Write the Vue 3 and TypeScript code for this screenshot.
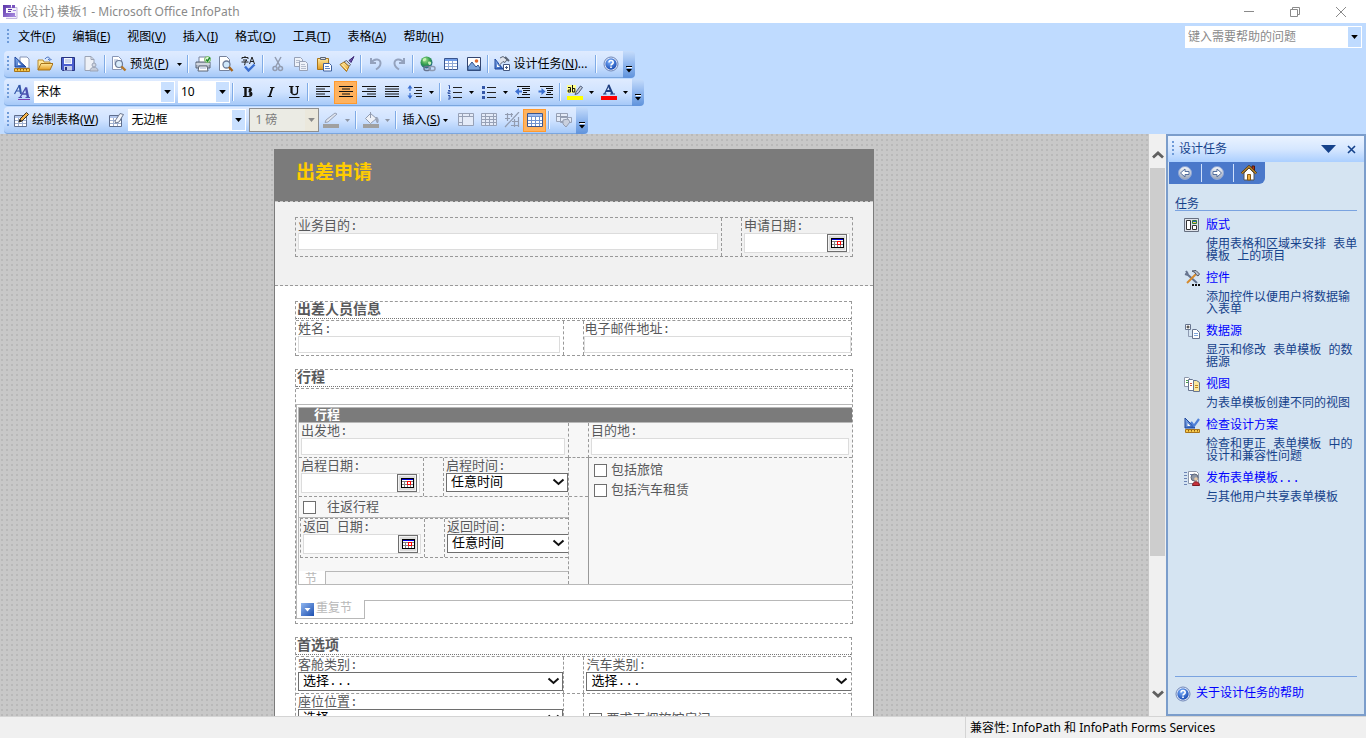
<script setup lang="ts">
import { ref } from 'vue'

interface MenuEntry { label: string; key: string }
interface Task { icon: string; title: string; lines: string[] }
interface Tool { kind: 'btn' | 'sep' | 'caret' | 'text' | 'combo'; icon?: string; title?: string; label?: string; key?: string; tail?: string; value?: string; size?: string; active?: boolean; disabled?: boolean; drop?: boolean }

const menus: MenuEntry[] = [
  { label: '文件', key: 'F' },
  { label: '编辑', key: 'E' },
  { label: '视图', key: 'V' },
  { label: '插入', key: 'I' },
  { label: '格式', key: 'O' },
  { label: '工具', key: 'T' },
  { label: '表格', key: 'A' },
  { label: '帮助', key: 'H' },
]

const b = (icon: string, title: string, extra: Partial<Tool> = {}): Tool => ({ kind: 'btn', icon, title, ...extra })
const sep: Tool = { kind: 'sep' }
const caret = (title: string, disabled = false): Tool => ({ kind: 'caret', title, disabled })

const bars: { name: string; tools: Tool[] }[] = [
  {
    name: '标准',
    tools: [
      b('design', '设计表单'), b('open', '打开'), b('save', '保存'), b('publish', '发布'), sep,
      { kind: 'text', icon: 'preview', label: '预览', key: 'P' }, caret('预览选项'), sep,
      b('print', '打印'), b('lens', '打印预览'), b('spell', '拼写检查'), sep,
      b('cut', '剪切'), b('copy', '复制'), b('paste', '粘贴'), b('brush', '格式刷'), sep,
      b('undo', '撤消'), b('redo', '恢复'), sep,
      b('globe', '超链接'), b('table', '表格'), b('picture', '图片'), sep,
      { kind: 'text', icon: 'tools', label: '设计任务', key: 'N', tail: '...' }, sep,
      b('help', '帮助'),
    ],
  },
  {
    name: '格式',
    tools: [
      b('styles', '样式'), { kind: 'combo', title: '字体', value: '宋体', size: 'font' },
      { kind: 'combo', title: '字号', value: '10', size: 'points' }, sep,
      b('bold', '加粗'), b('italic', '倾斜'), b('underline', '下划线'), sep,
      b('left', '左对齐'), b('center', '居中', { active: true }), b('right', '右对齐'), b('justify', '两端对齐'),
      b('spacing', '行距'), caret('行距选项'), sep,
      b('numbers', '编号'), caret('编号选项'), b('bullets', '项目符号'), caret('项目符号选项'),
      b('outdent', '减少缩进'), b('indent', '增加缩进'), sep,
      b('highlight', '突出显示'), caret('突出显示颜色'), b('color', '字体颜色'), caret('字体颜色选项'),
    ],
  },
  {
    name: '表格',
    tools: [
      { kind: 'text', icon: 'drawtable', label: '绘制表格', key: 'W' }, b('eraser', '擦除'),
      { kind: 'combo', title: '线型', value: '无边框', size: 'line' },
      { kind: 'combo', title: '粗细', value: '1 磅', size: 'weight', disabled: true },
      b('pen', '边框颜色'), caret('边框颜色选项', true), sep,
      b('bucket', '底纹颜色'), caret('底纹颜色选项', true), sep,
      { kind: 'text', label: '插入', key: 'S', drop: true },
      b('merge', '合并单元格'), b('split', '拆分单元格'), b('diag', '斜线'),
      b('grid', '显示网格线', { active: true }), sep, b('props', '表格属性'),
    ],
  },
]

const tasks: Task[] = [
  { icon: 'layout', title: '版式', lines: ['使用表格和区域来安排 表单', '模板 上的项目'] },
  { icon: 'controls', title: '控件', lines: ['添加控件以便用户将数据输', '入表单'] },
  { icon: 'source', title: '数据源', lines: ['显示和修改 表单模板 的数', '据源'] },
  { icon: 'views', title: '视图', lines: ['为表单模板创建不同的视图'] },
  { icon: 'check', title: '检查设计方案', lines: ['检查和更正 表单模板 中的', '设计和兼容性问题'] },
  { icon: 'share', title: '发布表单模板...', lines: ['与其他用户共享表单模板'] },
]

const question = ref('')
</script>

<template>
  <div class="app">
    <svg class="defs" width="0" height="0" aria-hidden="true">
      <defs>
        <linearGradient id="gBlue" x1="0" y1="0" x2="1" y2="1"><stop offset="0" stop-color="#8fb6f0" /><stop offset="1" stop-color="#1d4fb0" /></linearGradient>
        <linearGradient id="gGold" x1="0" y1="0" x2="0" y2="1"><stop offset="0" stop-color="#ffe9a0" /><stop offset="1" stop-color="#e39a1c" /></linearGradient>
        <linearGradient id="gGrey" x1="0" y1="0" x2="0" y2="1"><stop offset="0" stop-color="#f6f8fc" /><stop offset="1" stop-color="#9aa4b8" /></linearGradient>
        <radialGradient id="gBall" cx=".4" cy=".3" r=".8"><stop offset="0" stop-color="#7db2ff" /><stop offset="1" stop-color="#0d3ea8" /></radialGradient>
        <radialGradient id="gGlobe" cx=".4" cy=".3" r=".8"><stop offset="0" stop-color="#9fe08a" /><stop offset=".5" stop-color="#2f9a4c" /><stop offset="1" stop-color="#1c4fa0" /></radialGradient>
        <linearGradient id="gApp" x1="0" y1="0" x2="1" y2="1"><stop offset="0" stop-color="#5b35a8" /><stop offset="1" stop-color="#a98be0" /></linearGradient>
      </defs>
      <symbol id="i-app" viewBox="0 0 16 16">
        <path d="M6 3.500h9v11H4" fill="#f3f0fa" stroke="#c3b6de" /><path d="M1 1h8v3H4v5h9v4H1z" fill="url(#gApp)" /><path d="M10 1h3v3h-3z" fill="#7a55c0" /><path d="M6 5.500h4M6 7.500h3" stroke="#5b35a8" stroke-width="1.200" /><path d="M11 6.500h3M11 12.500h3" stroke="#a98be0" />
      </symbol>
      <symbol id="i-design" viewBox="0 0 16 16">
        <path d="M6 1h7l2 2v9H6z" fill="#fff" stroke="#8795b5" /><path d="M1 1v10h11z" fill="url(#gBlue)" stroke="#1c459c" /><path d="M4 6v3h3z" fill="#fff" /><path d="M.5 12.500h15v3H.5z" fill="#f7c94b" stroke="#a8741a" /><path d="M3.500 13v1.500M6.500 13v1.500M9.500 13v1.500M12.500 13v1.500" stroke="#8a5a10" />
      </symbol>
      <symbol id="i-open" viewBox="0 0 16 16">
        <path d="M1 14V4h5l1 2h6v2" fill="#ffe79a" stroke="#b98a2c" /><path d="M1 14l3-6.500h12L13 14z" fill="url(#gGold)" stroke="#a8741a" /><path d="M8 3c2-3 5-2 5 .5m-2-.5l2 1.500L14.500 3" fill="none" stroke="#3c66b8" />
      </symbol>
      <symbol id="i-save" viewBox="0 0 16 16">
        <path d="M1.500 1.500h13v13h-12l-1-1z" fill="#4c5fd0" stroke="#27347f" /><path d="M4 2h8v6H4z" fill="#f4f7ff" /><path d="M5 4h6M5 6h6" stroke="#a9b6d8" /><path d="M4 10h8v4.500H4z" fill="#c5cdea" /><path d="M5 11h2v3H5z" fill="#27347f" />
      </symbol>
      <symbol id="i-publish" viewBox="0 0 16 16">
        <path d="M2 .5h6l3 3v11H2z" fill="#eef1f7" stroke="#9aa3b5" /><path d="M8 .5v3h3" fill="none" stroke="#9aa3b5" /><circle cx="11" cy="9" r="2" fill="#d3d9e4" stroke="#9aa3b5" /><path d="M7 15c0-5 8-5 8 0z" fill="#c5ccd9" stroke="#9aa3b5" />
      </symbol>
      <symbol id="i-preview" viewBox="0 0 16 16">
        <path d="M1.500.5h6l3 3v10h-9z" fill="#fff" stroke="#8795b5" /><path d="M3 4h4M3 6h5M3 8h3" stroke="#9fb0d0" /><circle cx="8" cy="8" r="3.500" fill="#d9ecfb" stroke="#6c7b98" stroke-width="1.200" /><path d="M10.500 10.500l4 4" stroke="#b5782b" stroke-width="2.400" />
      </symbol>
      <symbol id="i-print" viewBox="0 0 16 16">
        <path d="M4 6V1h7v5" fill="#fff" stroke="#76829c" /><path d="M1 6h14v6H1z" fill="#b0b8c6" stroke="#5b6474" /><path d="M1 8h14" stroke="#f3f5f9" /><path d="M4 10h8l1 5H3z" fill="#fff" stroke="#5b6474" /><path d="M5 12h6" stroke="#9fb0d0" /><circle cx="12.500" cy="3.500" r="3" fill="#dff3d8" stroke="#6db35a" /><path d="M11 3.500l1.500 1.500L15 1.500" fill="none" stroke="#1f8b2a" stroke-width="1.500" />
      </symbol>
      <symbol id="i-lens" viewBox="0 0 16 16">
        <path d="M1.500.5h7l3 3v11h-10z" fill="#fff" stroke="#76829c" /><circle cx="8.500" cy="8.500" r="3.500" fill="#cfe7fa" stroke="#6c7b98" stroke-width="1.300" /><path d="M11 11l3.500 4" stroke="#a5641c" stroke-width="2.400" />
      </symbol>
      <symbol id="i-spell" viewBox="0 0 16 16">
        <path d="M1 3V1.500h6V3M4 0v1.500M2 4h4L4 5.500V8.500L3 9M.5 6h7" fill="none" stroke="#222" /><path d="M8.500 8l2.500-7 2.500 7M9.500 5.500h3.500" fill="none" stroke="#222" /><path d="M4 10.500l3.500 4 6-6" fill="none" stroke="#3b6fd0" stroke-width="2.400" />
      </symbol>
      <symbol id="i-cut" viewBox="0 0 16 16">
        <path d="M5 1l5 9M11 1L6 10" fill="none" stroke="#929cb0" stroke-width="1.500" /><circle cx="5" cy="12.500" r="2" fill="none" stroke="#929cb0" stroke-width="1.500" /><circle cx="10.500" cy="12.500" r="2" fill="none" stroke="#929cb0" stroke-width="1.500" />
      </symbol>
      <symbol id="i-copy" viewBox="0 0 16 16">
        <path d="M1.500 1.500h6l2 2v7h-8z" fill="#eef2f9" stroke="#97a1b6" /><path d="M3 4.500h4M3 6.500h4" stroke="#b5bdcd" /><path d="M6.500 5.500h6l2 2v7h-8z" fill="#eef2f9" stroke="#97a1b6" /><path d="M8 8.500h4M8 10.500h5M8 12.500h5" stroke="#b5bdcd" />
      </symbol>
      <symbol id="i-paste" viewBox="0 0 16 16">
        <path d="M1.500 2.500h11v11h-11z" fill="url(#gGold)" stroke="#a8741a" /><path d="M4.500 1.500h5v2h-5z" fill="#d7dbe4" stroke="#5b6474" /><path d="M7.500 7.500h6l2 2v5.500h-8z" fill="#fff" stroke="#3f5f9c" /><path d="M9 10.500h4M9 12.500h5" stroke="#5f86c8" />
      </symbol>
      <symbol id="i-brush" viewBox="0 0 16 16">
        <path d="M15 .5l-5 4 2 2z" fill="#6b4fa8" stroke="#3e2a77" /><path d="M7.500 4.500l4 4-1.500 2-5-4.500z" fill="#cfd4e0" stroke="#5b6474" /><path d="M5 6l5 4.500-2.500 5L1 8.500z" fill="url(#gGold)" stroke="#a8741a" /><path d="M3 8.500l5 5.500" stroke="#fff3c0" />
      </symbol>
      <symbol id="i-undo" viewBox="0 0 16 16"><path d="M3 2v5h5M3.500 6.500C6 2 13 2.500 12.500 7.500c-.2 2.500-2 4.500-4.500 6" fill="none" stroke="#94a2bd" stroke-width="2" /></symbol>
      <symbol id="i-redo" viewBox="0 0 16 16"><path d="M13 2v5H8M12.500 6.500C10 2 3 2.500 3.500 7.500c.2 2.500 2 4.500 4.500 6" fill="none" stroke="#94a2bd" stroke-width="2" /></symbol>
      <symbol id="i-globe" viewBox="0 0 16 16">
        <circle cx="6.500" cy="6.500" r="6" fill="url(#gGlobe)" /><path d="M3 3c2-2 4-1 3 1S2 6 3 3M8 6c2-1 4 0 3 2s-3 1-3-2" fill="#c4f0b4" /><rect x="4" y="10.500" width="6" height="4" rx="2" fill="none" stroke="#66748f" stroke-width="1.500" /><rect x="9" y="10.500" width="6" height="4" rx="2" fill="none" stroke="#8e9ab2" stroke-width="1.500" />
      </symbol>
      <symbol id="i-table" viewBox="0 0 16 16">
        <path d="M1.500 2.500h13v11h-13z" fill="#fff" stroke="#39558f" /><path d="M2 3h12v2H2z" fill="#6f9be8" /><path d="M2 7.500h12M2 10.500h12M5.500 5v8.500M9.500 5v8.500" stroke="#8fa8d6" />
      </symbol>
      <symbol id="i-picture" viewBox="0 0 16 16">
        <path d="M1.500 1.500h13v13h-13z" fill="#fff" stroke="#33456f" /><path d="M2 14v-3l4-5 4 5 2-2 2 3v2z" fill="#7ea6dc" stroke="#33568f" /><circle cx="10.500" cy="5" r="1.800" fill="#e06a2c" />
      </symbol>
      <symbol id="i-tools" viewBox="0 0 16 16">
        <path d="M1 3v10h8z" fill="url(#gBlue)" stroke="#1c459c" /><path d="M3 8v3h3z" fill="#fff" /><path d="M6 2l3-1.500 4 3-2 3-2-1-4 4" fill="#dfe3ec" stroke="#5b6474" /><path d="M11 1l4 4" stroke="#5b6474" stroke-width="2" /><path d="M9.500 8.500h6v6h-6z" fill="#fff" stroke="#44577f" /><path d="M12.500 10v3M11 11.500h3" stroke="#44577f" />
      </symbol>
      <symbol id="i-help" viewBox="0 0 16 16">
        <circle cx="8" cy="8" r="7" fill="#e8eefb" stroke="#6f86b8" /><circle cx="8" cy="8" r="5.700" fill="url(#gBall)" /><path d="M6 6.500c0-3 4.200-2.500 4.200 0C10.200 8 8 8 8 9.500M8 10.500v1.500" fill="none" stroke="#fff" stroke-width="1.600" />
      </symbol>
      <symbol id="i-styles" viewBox="0 0 16 16">
        <path d="M.5 10L5.500 1M2.500 7h4" fill="none" stroke="#3457a8" stroke-width="1.200" /><path d="M5.500 1L7 10" stroke="#3457a8" stroke-width="2" /><path d="M6 13.500l6-10M8.500 10h5" fill="none" stroke="#4a4fb0" stroke-width="1.400" /><path d="M12 3.500l2 10" stroke="#4a4fb0" stroke-width="2.400" /><path d="M4.500 13.500h3.500M11.500 13.500h4.500" stroke="#4a4fb0" /><path d="M4 15.500h12" stroke="#7d3fb0" />
      </symbol>
      <symbol id="i-bold" viewBox="0 0 16 16"><path d="M3 3.500h5.500c3.500 0 3.500 4 0 4.200 4.500 0 4.500 4.800 0 4.800H3" fill="none" stroke="#111" stroke-width="1.200" /><path d="M5.500 3v10M10 4.500v2.500M10.500 8.500v3" stroke="#111" stroke-width="2.400" /></symbol>
      <symbol id="i-italic" viewBox="0 0 16 16"><path d="M7 3.500h4.500M4.500 12.500H9" fill="none" stroke="#111" /><path d="M9.500 3.500l-3 9" stroke="#111" stroke-width="1.800" /></symbol>
      <symbol id="i-underline" viewBox="0 0 16 16"><path d="M3 2.500h4.500M9.500 2.500H13M11.500 2.500V8c0 3.500-6 3.500-6 0" fill="none" stroke="#111" stroke-width="1.200" /><path d="M5.500 2.500V9" stroke="#111" stroke-width="2.200" /><path d="M3 13.500h10.500" stroke="#111" /></symbol>
      <symbol id="i-left" viewBox="0 0 16 16"><path d="M1 2.500h14M1 5h9M1 7.500h14M1 10h9M1 12.500h14" stroke="#111" stroke-width="1.100" /></symbol>
      <symbol id="i-center" viewBox="0 0 16 16"><path d="M1 2.500h14M4 5h8M1 7.500h14M4 10h8M1 12.500h14" stroke="#111" stroke-width="1.100" /></symbol>
      <symbol id="i-right" viewBox="0 0 16 16"><path d="M1 2.500h14M6 5h9M1 7.500h14M6 10h9M1 12.500h14" stroke="#111" stroke-width="1.100" /></symbol>
      <symbol id="i-justify" viewBox="0 0 16 16"><path d="M1 2.500h14M1 5h14M1 7.500h14M1 10h14M1 12.500h14" stroke="#111" stroke-width="1.100" /></symbol>
      <symbol id="i-spacing" viewBox="0 0 16 16"><path d="M7 3.500h8M9 6.500h6M7 9.500h8M9 12.500h6" stroke="#222" /><path d="M3 2v12" stroke="#3b6fd0" stroke-width="1.200" stroke-dasharray="5 2" /><path d="M.5 4.500L3 1l2.500 3.500zM.5 11.500L3 15l2.500-3.500z" fill="#3b6fd0" /></symbol>
      <symbol id="i-numbers" viewBox="0 0 16 16"><path d="M6 3.500h9M6 8.500h9M6 13.500h9" stroke="#222" /><path d="M1.500 1.500h1V5M1 6.500h2v1.500H1v1.500h2.500M1 11.500h2v3.500H1M1.500 13H3" fill="none" stroke="#3457a8" /></symbol>
      <symbol id="i-bullets" viewBox="0 0 16 16"><path d="M6 3.500h9M6 8.500h9M6 13.500h9" stroke="#222" /><path d="M1 2h3v3H1zM1 7h3v3H1zM1 12h3v3H1z" fill="#3457a8" /></symbol>
      <symbol id="i-outdent" viewBox="0 0 16 16"><path d="M2 2.500h13M7 4.500h8M8 6.500h7M8 8.500h4M7 10.500h8M2 13.500h13" stroke="#111" /><path d="M0 7.500L4 4v2.500h3v2H4V11z" fill="#3b6fd0" /></symbol>
      <symbol id="i-indent" viewBox="0 0 16 16"><path d="M2 2.500h13M8 4.500h7M9 6.500h6M9 8.500h4M8 10.500h7M2 13.500h13" stroke="#111" /><path d="M7.500 7.500L3.500 4v2.500h-3v2h3V11z" fill="#3b6fd0" /></symbol>
      <symbol id="i-highlight" viewBox="0 0 16 16"><path d="M0 1h9v8H0z" fill="#ffff8c" /><path d="M1 3.500h2.500V8H1.200V6h2.300M5.500 1v7h2.300V4.500H5.500" fill="none" stroke="#111" /><path d="M9 8l4.500-6 2 1.500-4.500 6-3 1z" fill="#c3cad8" stroke="#4a5878" /><path d="M0 12h16v4H0z" fill="#ff0" /></symbol>
      <symbol id="i-color" viewBox="0 0 16 16"><path d="M2 10h3.500M9 10h5M3.500 10L8 .8" fill="none" stroke="#1f3f80" stroke-width="1.200" /><path d="M7.500 1l4 9M5 7h5" stroke="#1f3f80" stroke-width="2" /><path d="M0 12h16v4H0z" fill="#f00" /></symbol>
      <symbol id="i-drawtable" viewBox="0 0 16 16">
        <path d="M1.500 3.500h12v11h-12z" fill="#fff" stroke="#5e6d8c" /><path d="M2 4h11v2H2z" fill="#b4c7ec" /><path d="M2 8.500h11M2 11.500h11M5.500 6v8M9.500 6v8" stroke="#9fb0d0" /><path d="M6 10l1-3 6.500-6.500 2 2L9 9z" fill="#f3b24c" stroke="#3a3020" /><path d="M6 10l1-3 2 2z" fill="#222" />
      </symbol>
      <symbol id="i-eraser" viewBox="0 0 16 16">
        <path d="M1.500 3.500h12v11h-12z" fill="#fff" stroke="#5e6d8c" /><path d="M2 4h11v2H2z" fill="#b4c7ec" /><path d="M2 8.500h11M2 11.500h11M5.500 6v8M9.500 6v8" stroke="#9fb0d0" /><path d="M7 9l5-7.500 3.500 1L11 10l-3.500 1z" fill="#f3f5fa" stroke="#6c7890" />
      </symbol>
      <symbol id="i-pen" viewBox="0 0 16 16"><path d="M2 10.500l3-.5L14 2l-2-1-9 7z" fill="#e0e5ee" stroke="#97a1b6" /><path d="M0 12h16v4H0z" fill="#a0a0a0" /></symbol>
      <symbol id="i-bucket" viewBox="0 0 16 16"><path d="M2.500 6.500l5-5 6 5-6 5z" fill="#eef1f7" stroke="#929cb0" /><path d="M7.500 0v6M13.500 5c2.500 2 1.500 5 1 6-1.500-2-2-4-1-6z" fill="#a5aec0" stroke="#929cb0" /><path d="M0 12h16v4H0z" fill="#a0a0a0" /></symbol>
      <symbol id="i-merge" viewBox="0 0 16 16"><path d="M.5 1.500h15v12H.5z" fill="#e4ebf8" stroke="#97a1b6" /><path d="M0 4.500h16M4.500 1v12.500M11.500 1v3.500M0 10.500h5" stroke="#97a1b6" /></symbol>
      <symbol id="i-split" viewBox="0 0 16 16"><path d="M.5 1.500h15v12H.5z" fill="#e4ebf8" stroke="#97a1b6" /><path d="M0 4.500h16M0 7.500h16M0 10.500h16M4.500 1v12.500M8.500 4v9M12.500 1v12.500" stroke="#97a1b6" /></symbol>
      <symbol id="i-diag" viewBox="0 0 16 16"><path d="M15 0L1 15M1 2.500h8M1 6.500h5M3.500 1v8M7.500 1v4M8 9.500h7M7 13.500h8M10.500 7v8M14.500 5v10" stroke="#929cb0" stroke-width="1.200" /></symbol>
      <symbol id="i-grid" viewBox="0 0 16 16"><path d="M.5 1.500h15v13H.5z" fill="#fff" stroke="#39558f" /><path d="M1 2h14v2H1z" fill="#9fbcf0" /><path d="M1 4.500h14M1 8.500h14M1 11.500h14M4.500 4v10M8.500 4v10M12.500 4v10" stroke="#6f93d0" /></symbol>
      <symbol id="i-props" viewBox="0 0 16 16"><path d="M.5 1.500h11v8H.5zM4.500 5.500h11v5h-11z" fill="#e4ebf8" stroke="#97a1b6" /><path d="M0 4.500h11M4.500 1v8M7 8l5-1 2 3-4 5-3-3z" fill="#c9d0de" stroke="#929cb0" /></symbol>
      <symbol id="i-layout" viewBox="0 0 16 16"><path d="M.5 1.500h14v13H.5z" fill="#dfe3ea" stroke="#666f80" /><path d="M2.500 3.500h4v9h-4z" fill="#fff" stroke="#333" /><path d="M8.500 3.500h4v3h-4z" fill="#f1d04c" stroke="#2f7a3c" /><path d="M8.500 8.500h4v4h-4z" fill="#fff" stroke="#333" /><path d="M9 4h3v1H9z" fill="#2c66d0" /></symbol>
      <symbol id="i-controls" viewBox="0 0 16 16"><path d="M2 1l2 3M1 4l3 1 9 8" fill="none" stroke="#66748f" stroke-width="2" /><path d="M3 13L12 4" stroke="#d58a2c" stroke-width="2" /><path d="M8 1l4-.5 3.500 3.500-1.500 2-2-1.500-1-2z" fill="#b9c0cc" stroke="#4d5666" /><path d="M8 14h2v2H8zM11 14h2v2h-2zM14 14h2v2h-2z" fill="#111" /></symbol>
      <symbol id="i-source" viewBox="0 0 16 16"><path d="M1.500 1.500h5v5h-5z" fill="#fff" stroke="#66748f" /><path d="M4 2.500v3M2.500 4h3" stroke="#222" /><path d="M4.500 7v6.500H8" fill="none" stroke="#8e9ab2" /><path d="M8.500 6.500h4l3 3v6h-7z" fill="#fff" stroke="#66748f" /><path d="M10 10.500h4M10 12.500h4" stroke="#7ea6dc" /></symbol>
      <symbol id="i-views" viewBox="0 0 16 16"><path d="M.5 1.500h4l2 2v7h-6z" fill="#fff" stroke="#8d97ab" /><path d="M4.500 3.500h4l2 2v9h-6z" fill="#fff" stroke="#66748f" /><path d="M9.500 4.500h3l3 2v9H9.500z" fill="#fbe7a0" stroke="#66748f" /><path d="M2 4.500h2M2 6.500h2" stroke="#4aa04a" /><path d="M6 7.500h2M6 9.500h2" stroke="#d0503c" /><path d="M11 9.500h3M11 11.500h3" stroke="#c88a1c" /></symbol>
      <symbol id="i-check" viewBox="0 0 16 16"><path d="M1 1v10h10z" fill="url(#gBlue)" stroke="#1c459c" /><path d="M3.500 6v3h3z" fill="#fff" /><path d="M7 5l3 4 5-7" fill="none" stroke="#4f80d8" stroke-width="2.200" /><path d="M1.500 12.500h14v3h-14z" fill="#f7c94b" stroke="#a8741a" /><path d="M4.500 13v1.500M7.500 13v1.500M10.500 13v1.500M13.500 13v1.500" stroke="#8a5a10" /></symbol>
      <symbol id="i-share" viewBox="0 0 16 16"><path d="M4.500 1.500h8l2 2v10h-10z" fill="#fff" stroke="#8d97ab" /><path d="M0 2.500h3M0 5.500h3M0 8.500h3M0 11.500h3M0 14.500h3M6 4.500h5" stroke="#6c83b5" /><circle cx="10.500" cy="7.500" r="3.500" fill="#8f98a8" stroke="#5d6676" /><circle cx="12" cy="9" r="1.800" fill="#e9cba8" /><path d="M8.500 15.500c0-5 7-5 7 0z" fill="#c8323c" stroke="#7c1a22" /></symbol>
      <symbol id="i-back" viewBox="0 0 16 16"><circle cx="8" cy="8" r="6.500" fill="url(#gGrey)" stroke="#8ea6d6" /><path d="M3.500 8L8 4v2.500h4v3H8V12z" fill="#fff" stroke="#56709f" /></symbol>
      <symbol id="i-next" viewBox="0 0 16 16"><circle cx="8" cy="8" r="6.500" fill="url(#gGrey)" stroke="#8ea6d6" /><path d="M12.500 8L8 4v2.500H4v3h4V12z" fill="#fff" stroke="#56709f" /></symbol>
      <symbol id="i-home" viewBox="0 0 16 16"><path d="M11 1h2.500v5H11z" fill="#b5301c" stroke="#4a1a10" /><path d="M3 8l5-5 5 5v7H3z" fill="#fff" stroke="#555" /><path d="M.8 8.500L8 1.500l7.200 7" fill="none" stroke="#5a3a10" stroke-width="2.400" /><path d="M.8 8.500L8 1.500l7.200 7" fill="none" stroke="#f0b840" /><path d="M6.500 9.500h3V15h-3z" fill="#f0b040" stroke="#8a5a10" /></symbol>
      <symbol id="i-cal" viewBox="0 0 13 10"><path d="M0 0h13v10H0z" fill="#000" /><path d="M1 1h11v8H1z" fill="#fff" /><path d="M1 3h11v1H1zM1 6h11v1H1zM3 3h1v6H3zM6 3h1v6H6zM9 3h1v6H9z" fill="#808080" /><path d="M1 1h11v1H1z" fill="#0000e0" /><path d="M6 3h4v4H6z" fill="#f00" /><path d="M7 4h2v2H7z" fill="#fff" /></symbol>
      <symbol id="i-caret" viewBox="0 0 5 3"><path d="M0 0h5L2.500 3z" fill="currentColor" /></symbol>
      <symbol id="i-chev" viewBox="0 0 12 8"><path d="M1 1.500l5 4.500 5-4.500" fill="none" stroke="currentColor" stroke-width="2" /></symbol>
      <symbol id="i-arrow" viewBox="0 0 12 8"><path d="M1 1.500l5 4.500 5-4.500" fill="none" stroke="currentColor" stroke-width="2.800" /></symbol>
      <symbol id="i-more" viewBox="0 0 6 8"><path d="M0 .5h6" stroke="#000" /><path d="M0 3h6L3 6.500z" fill="#000" /><path d="M1 1.500h6" stroke="#fff" /></symbol>
      <symbol id="i-repeat" viewBox="0 0 13 13"><path d="M0 0h13v13H0z" fill="url(#gBlue)" /><path d="M3.500 5h6l-3 3.500z" fill="#fff" /></symbol>
    </svg>

    <header class="titlebar">
      <svg class="ic"><use href="#i-app" /></svg>
      <h1>(设计) 模板1 - Microsoft Office InfoPath</h1>
      <div class="winbtns">
        <button type="button" aria-label="最小化"><svg width="12" height="12"><path d="M1 5.500h10" stroke="#8a8a8a" /></svg></button>
        <button type="button" aria-label="还原"><svg width="12" height="12"><path d="M1.500 3.500h7v7h-7zM3.500 3V1.500h7v7H9" fill="none" stroke="#8a8a8a" /></svg></button>
        <button type="button" aria-label="关闭"><svg width="12" height="12"><path d="M1 1l10 10M11 1L1 11" stroke="#8a8a8a" /></svg></button>
      </div>
    </header>

    <nav class="menubar">
      <span class="grip"></span>
      <button v-for="m in menus" :key="m.key" type="button">{{ m.label }}(<u>{{ m.key }}</u>)</button>
      <div class="ask">
        <input v-model="question" type="text" placeholder="键入需要帮助的问题" aria-label="键入需要帮助的问题">
        <button type="button" aria-label="最近的问题"><svg class="tri"><use href="#i-caret" /></svg></button>
      </div>
    </nav>

    <div class="bars">
      <div v-for="bar in bars" :key="bar.name" class="bar" role="toolbar" :aria-label="bar.name">
        <div class="strip">
          <span class="grip"></span>
          <template v-for="(t, i) in bar.tools" :key="i">
            <span v-if="t.kind === 'sep'" class="sep"></span>
            <button v-else-if="t.kind === 'btn'" type="button" class="tool" :class="{ active: t.active }" :aria-label="t.title">
              <svg class="ic"><use :href="'#i-' + t.icon" /></svg>
            </button>
            <button v-else-if="t.kind === 'caret'" type="button" class="drop" :class="{ off: t.disabled }" :aria-label="t.title">
              <svg class="tri"><use href="#i-caret" /></svg>
            </button>
            <button v-else-if="t.kind === 'text'" type="button" class="texty">
              <svg v-if="t.icon" class="ic"><use :href="'#i-' + t.icon" /></svg>
              <span>{{ t.label }}(<u>{{ t.key }}</u>){{ t.tail }}</span>
              <svg v-if="t.drop" class="tri"><use href="#i-caret" /></svg>
            </button>
            <span v-else class="combo" :class="[t.size, { off: t.disabled }]">
              <select :aria-label="t.title" :disabled="t.disabled"><option>{{ t.value }}</option></select>
              <span class="cap"><svg class="tri"><use href="#i-caret" /></svg></span>
            </span>
          </template>
        </div>
        <button type="button" class="more" aria-label="工具栏选项"><svg width="6" height="8"><use href="#i-more" /></svg></button>
      </div>
    </div>

    <div class="work">
      <main class="canvas">
        <article class="sheet">
          <h2 class="banner">出差申请</h2>
          <section class="intro">
            <div class="row first">
              <div class="cell"><label for="purpose">业务目的:</label><input id="purpose" type="text"></div>
              <div class="gut"></div>
              <div class="cell narrow">
                <label for="reqdate">申请日期:</label>
                <div class="date"><input id="reqdate" type="text"><button type="button" aria-label="选择日期"><svg><use href="#i-cal" /></svg></button></div>
              </div>
            </div>
          </section>

          <section class="block">
            <h3>出差人员信息</h3>
            <div class="row lined">
              <div class="cell"><label for="name">姓名:</label><input id="name" type="text"></div>
              <div class="gut"></div>
              <div class="cell tight"><label for="mail">电子邮件地址:</label><input id="mail" type="text"></div>
            </div>
          </section>

          <section class="block trip">
            <h3>行程</h3>
            <div class="holder">
              <div class="region">
                <div class="inner">
                  <h4>行程</h4>
                  <div class="legs">
                    <div class="cell from"><label for="from">出发地:</label><input id="from" type="text"></div>
                    <div class="gut low"></div>
                    <div class="cell from"><label for="to">目的地:</label><input id="to" type="text"></div>
                    <div class="left">
                      <div class="times">
                        <div class="cell">
                          <label for="d1">启程日期:</label>
                          <div class="date"><input id="d1" type="text"><button type="button" aria-label="选择日期"><svg><use href="#i-cal" /></svg></button></div>
                        </div>
                        <div class="gut"></div>
                        <div class="cell end">
                          <label for="t1">启程时间:</label>
                          <span class="pick"><select id="t1"><option>任意时间</option></select><svg><use href="#i-chev" /></svg></span>
                        </div>
                      </div>
                      <label class="tick round"><input type="checkbox"><span>往返行程</span></label>
                      <div class="times back">
                        <div class="cell">
                          <label for="d2">返回 日期:</label>
                          <div class="date"><input id="d2" type="text"><button type="button" aria-label="选择日期"><svg><use href="#i-cal" /></svg></button></div>
                        </div>
                        <div class="gut"></div>
                        <div class="cell end">
                          <label for="t2">返回时间:</label>
                          <span class="pick flush"><select id="t2"><option>任意时间</option></select><svg><use href="#i-chev" /></svg></span>
                        </div>
                      </div>
                      <div class="tabrow"><span>节</span><i></i></div>
                    </div>
                    <div class="gut split"><span></span></div>
                    <div class="extras">
                      <label class="tick"><input type="checkbox"><span>包括旅馆</span></label>
                      <label class="tick"><input type="checkbox"><span>包括汽车租赁</span></label>
                    </div>
                  </div>
                </div>
                <div class="repeat"><span><svg><use href="#i-repeat" /></svg>重复节</span><i></i></div>
              </div>
            </div>
          </section>

          <section class="block">
            <h3>首选项</h3>
            <div class="row lined">
              <div class="cell sel"><label for="cabin">客舱类别:</label><span class="pick"><select id="cabin"><option>选择...</option></select><svg><use href="#i-chev" /></svg></span></div>
              <div class="gut"></div>
              <div class="cell sel"><label for="car">汽车类别:</label><span class="pick flush"><select id="car"><option>选择...</option></select><svg><use href="#i-chev" /></svg></span></div>
            </div>
            <div class="row">
              <div class="cell sel"><label for="seat">座位位置:</label><span class="pick"><select id="seat"><option>选择...</option></select><svg><use href="#i-chev" /></svg></span></div>
              <div class="gut"></div>
              <div class="smoke"><label class="tick"><input type="checkbox"><span>要求无烟旅馆房间</span></label></div>
            </div>
          </section>
        </article>
      </main>

      <div class="scroll">
        <button type="button" aria-label="向上滚动"><svg class="up"><use href="#i-arrow" /></svg></button>
        <div class="track"><div class="thumb"></div></div>
        <button type="button" class="down" aria-label="向下滚动"><svg><use href="#i-arrow" /></svg></button>
      </div>

      <aside class="pane">
        <div class="panehead">
          <span class="grip"></span>
          <h2>设计任务</h2>
          <button type="button" aria-label="其他任务窗格"><svg width="15" height="8"><path d="M0 0h15L7.500 8z" fill="#15428b" /></svg></button>
          <button type="button" aria-label="关闭窗格"><svg width="9" height="9"><path d="M1 1l7 7M8 1L1 8" stroke="#15428b" stroke-width="1.600" /></svg></button>
        </div>
        <div class="panenav">
          <button type="button" aria-label="后退"><svg class="ic"><use href="#i-back" /></svg></button>
          <button type="button" aria-label="前进"><svg class="ic"><use href="#i-next" /></svg></button>
          <button type="button" aria-label="开始"><svg class="ic"><use href="#i-home" /></svg></button>
        </div>
        <div class="panebody">
          <h3>任务</h3>
          <ul>
            <li v-for="t in tasks" :key="t.title">
              <svg class="ic"><use :href="'#i-' + t.icon" /></svg>
              <div>
                <a href="#">{{ t.title }}</a>
                <p><span v-for="l in t.lines" :key="l">{{ l }}</span></p>
              </div>
            </li>
          </ul>
          <div class="panefoot">
            <svg class="ic"><use href="#i-help" /></svg><a href="#">关于设计任务的帮助</a>
          </div>
        </div>
      </aside>
    </div>

    <footer class="status"><span></span><p>兼容性: InfoPath 和 InfoPath Forms Services</p></footer>
  </div>
</template>

<style>
body { margin: 0; }
</style>

<style scoped>
.app { display: flex; flex-direction: column; height: 100vh; overflow: hidden; background: #bfdbff; color: #000; font: 12px/16px "Noto Sans", "Noto Sans CJK SC", sans-serif; }
.app * { box-sizing: border-box; }
.defs { position: absolute; }
h1, h2, h3, h4, p, ul { margin: 0; padding: 0; font-size: 12px; font-weight: 400; }
ul { list-style: none; }
button { display: flex; align-items: center; justify-content: center; padding: 0; border: 0; background: none; color: inherit; font: inherit; }
input, select { margin: 0; font: inherit; border-radius: 0; }
input[type="text"] { width: 100%; padding: 0 3px; outline: 0; }
select { appearance: none; width: 100%; }
.ic { width: 16px; height: 16px; flex: none; }
.tri { width: 5px; height: 3px; flex: none; }
.grip { flex: none; width: 2px; height: 16px; background: repeating-linear-gradient(#6f9bd8 0 2px, transparent 2px 4px); }

.titlebar { display: flex; align-items: center; height: 23px; flex: none; padding: 0 2px; background: #fff; color: #8a8a8a; }
.titlebar h1 { flex: 1; padding-left: 5px; }
.winbtns { display: flex; }
.winbtns button { width: 46px; height: 22px; }

.menubar { display: flex; align-items: center; height: 27px; flex: none; padding: 0 4px 0 7px; }
.menubar > button { height: 22px; padding: 0 9px 0 8px; white-space: nowrap; }
.menubar .grip { margin-right: 1px; }
.ask { display: flex; width: 177px; height: 22px; margin-left: auto; border: 1px solid #fff; background: #fff; }
.ask input { flex: 1; min-width: 0; padding: 0 2px; border: 0; background: #fff; }
.ask input::placeholder { color: #8a8a8a; opacity: 1; }
.ask button { width: 13px; background: #bfdbff; }
.ask .tri { width: 7px; height: 4px; }

.bars { display: flex; flex-direction: column; gap: 1px; flex: none; padding: 1px 4px 0; }
.bar { display: flex; align-self: flex-start; height: 27px; }
.strip { display: flex; align-items: center; padding: 0 1px 0 3px; border-bottom: 1px solid #7ba6de; border-radius: 4px 0 0 4px; background: linear-gradient(#dfebff, #d0e3ff 50%, #a6c9f8); }
.strip > .grip { margin-right: 1px; }
.sep { flex: none; width: 6px; height: 18px; background: linear-gradient(90deg, transparent 2px, #7fabe6 2px 3px, #f4f9ff 3px 4px, transparent 4px); }
.tool { width: 23px; height: 23px; border: 1px solid transparent; }
.tool.active { border-color: #ff9a2e; background: #ffb25e; }
.drop { width: 11px; height: 23px; }
.off { color: #8d96a6; }
.texty { height: 23px; padding: 0 6px 0 3px; gap: 3px; white-space: nowrap; }
.more { align-items: flex-end; width: 12px; padding-bottom: 4px; border-radius: 0 4px 4px 0; background: linear-gradient(#c5dcfb, #8fb6ee 50%, #5f93dc); }
.combo { position: relative; display: flex; height: 22px; margin: 0 2px 0 1px; border: 1px solid #fff; background: #fff; }
.combo select { padding: 0 16px 0 2px; border: 0; background: transparent; color: #000; line-height: 18px; }
.combo .cap { position: absolute; top: 0; right: 0; bottom: 0; width: 13px; display: flex; align-items: center; justify-content: center; background: #c9e0ff; pointer-events: none; }
.combo .tri { width: 7px; height: 4px; }
.combo.font { width: 141px; }
.combo.points { width: 52px; margin-right: 0; }
.combo.line { width: 118px; }
.combo.weight { width: 70px; height: 24px; margin-right: 0; border: 1px solid #8f8f8f; background: #ebebe4; }
.combo.off select { color: #7a7a7a; padding-left: 5px; opacity: 1; }
.combo.off .cap { background: #ebe8dc; color: #8a8a8a; }

.work { display: flex; flex: 1; min-height: 0; }
.canvas {
  flex: 1; min-width: 0; overflow: hidden; padding: 15px 1px 0 0; background-color: #b9b9b9;
  background-image: linear-gradient(90deg, #c8c8c8 1px, transparent 1px 3px, #c8c8c8 3px), linear-gradient(transparent 2px, #c8c8c8 2px);
  background-size: 5px 5px;
}
.sheet { max-width: 600px; min-height: 900px; margin: 0 auto; border: solid #7b7b7b; border-width: 0 1px; background: #fff; color: #58595b; font: 13px/17px "Liberation Mono", "Noto Sans CJK SC", monospace; }
.banner { height: 53px; padding: 15px 21px 0; border-bottom: 1px dashed #c8c8c8; background: #7b7b7b; color: #fc0; font-size: 19px; font-weight: 700; line-height: 20px; }
.intro { padding: 15px 20px 28px; border-bottom: 1px dashed #999; background: #f1f1f1; }
.row { display: grid; grid-template-columns: minmax(0, 268fr) 21px minmax(0, 267fr); border-bottom: 1px dashed #999; }
.row.first { grid-template-columns: minmax(0, 1fr) 21px 110px; height: 40px; border: 1px dashed #999; }
.row.lined { margin-top: 1px; border-top: 1px dashed #999; }
.cell { min-width: 0; padding: 0 3px 2px 2px; }
.cell > label { display: block; height: 15px; white-space: nowrap; }
.cell > input { display: block; height: 17px; border: 1px solid #dcdcdc; background: #fff; }
.cell.tight { padding: 0 0 2px 0; }
.cell.sel { padding: 0 0 2px 2px; }
.cell.narrow { padding-right: 2px; }
.gut { border: dashed #999; border-width: 0 1px; }
.date { display: flex; align-items: center; height: 20px; border: 1px solid #dcdcdc; background: #fff; }
.date input { flex: 1; min-width: 0; height: 18px; border: 0; background: #fff; }
.date button { flex: none; width: 20px; height: 18px; margin-right: 2px; border: 1px solid #6e6e6e; background: #dcdcdc; box-shadow: inset 0 0 0 1px #f3f3f3; }
.date svg { width: 13px; height: 10px; }
.block { margin: 15px 21px 0 20px; border: 1px dashed #999; border-bottom: 0; }
.block + .block { margin-top: 13px; }
.block.trip { margin-right: 20px; border-bottom: 1px dashed #999; }
.block > h3 { height: 17px; padding-left: 1px; border-bottom: 1px dotted #777; font-size: 14px; font-weight: 700; line-height: 16px; }
.holder { margin-top: 1px; padding: 15px 0 4px; border-top: 1px dashed #999; }
.region { border: solid #b8b8b8; border-width: 1px 0 0 1px; padding-top: 2px; }
.inner { margin-left: 1px; border: 1px solid #b8b8b8; border-right: 0; }
.inner h4 { height: 15px; padding-left: 15px; border-bottom: 1px solid #b8b8b8; background: #7b7b7b; color: #fff; font-size: 13px; font-weight: 700; line-height: 16px; }
.legs { display: grid; grid-template-columns: minmax(0, 269fr) 21px minmax(0, 263fr); background: #f7f7f7; }
.cell.from { height: 35px; padding-bottom: 0; border-bottom: 1px dashed #999; }
.gut.low { border-bottom-width: 1px; }
.times { display: grid; grid-template-columns: minmax(0, 124fr) 21px minmax(0, 124fr); height: 39px; border-bottom: 1px dashed #999; }
.times .cell.end { padding-right: 0; }
.times.back { height: 40px; border-top: 1px dashed #999; border-left: 1px dashed #999; margin-left: 1px; }
.pick { position: relative; display: block; height: 19px; }
.pick select { display: block; height: 19px; padding: 0 18px 0 4px; border: 1px solid #6e6e6e; background: #fff; color: #000; line-height: 17px; }
.pick.flush select { border-right: 0; }
.pick svg { position: absolute; top: 5px; right: 3px; width: 13px; height: 8px; color: #111; pointer-events: none; }
.tick { display: flex; align-items: center; height: 20px; gap: 4px; }
.tick input { appearance: none; flex: none; width: 13px; height: 13px; border: 1px solid #6e6e6e; background: #fff; }
.tick.round { height: 21px; gap: 11px; padding-left: 4px; border-bottom: 1px solid #b8b8b8; }
.tabrow { display: flex; height: 13px; margin-top: 13px; overflow: hidden; color: #b8b8b8; font-size: 12px; line-height: 18px; }
.tabrow span { width: 26px; padding-left: 6px; background: #fff; }
.tabrow i { flex: 1; border: solid #b8b8b8; border-width: 1px 0 0 1px; }
.gut.split { border-right: 1px solid #999; }
.gut.split span { display: block; height: 39px; border-bottom: 1px dashed #999; }
.extras { padding: 2px 0 0 5px; }
.repeat { display: flex; margin-top: 15px; color: #b8b8b8; font-size: 12px; }
.repeat span { display: flex; align-items: center; gap: 2px; width: 67px; height: 19px; padding-left: 4px; border-bottom: 1px solid #b8b8b8; }
.repeat svg { width: 13px; height: 13px; }
.repeat i { flex: 1; border: solid #b8b8b8; border-width: 1px 0 0 1px; }
.smoke { padding: 15px 0 0 5px; }

.scroll { display: flex; flex-direction: column; width: 17px; flex: none; background: #f0f0f0; color: #606060; }
.scroll button { flex: none; height: 34px; padding-top: 8px; }
.scroll button.down { height: 44px; padding: 0; }
.scroll svg { width: 12px; height: 8px; }
.scroll .up { transform: rotate(180deg); }
.track { flex: 1; padding: 0 1px; }
.thumb { height: 77%; background: #cdcdcd; }

.pane { display: flex; flex-direction: column; width: 200px; flex: none; border: 2px solid #7b9dcb; background: #d5e4f2; color: #15428b; }
.panehead { display: flex; align-items: center; height: 26px; flex: none; padding: 0 8px 0 4px; background: linear-gradient(#eaf3ff, #d6e7ff 50%, #abcfff); }
.panehead h2 { flex: 1; padding-left: 5px; }
.panehead button { margin-left: 11px; }
.panenav { display: flex; align-self: flex-start; flex: none; height: 22px; margin-left: 1px; border-radius: 0 0 6px 0; background: #4a78ca; }
.panenav button { width: 32px; }
.panenav button + button { background: linear-gradient(#cfe0fb, #cfe0fb) 0 50% / 1px 18px no-repeat; }
.panebody { display: flex; flex-direction: column; flex: 1; padding: 12px 7px 0; font-family: "Liberation Mono", "Noto Sans CJK SC", monospace; }
.panebody h3 { height: 15px; border-bottom: 1px solid #7aa3e0; line-height: 18px; }
.panebody ul { flex: 1; padding: 6px 0 0 9px; }
.panebody li { display: flex; gap: 6px; margin-bottom: 7px; }
.panebody a { color: #00f; text-decoration: none; }
.panebody li a { display: block; height: 16px; line-height: 18px; }
.panebody p { margin-top: 6px; line-height: 12px; white-space: nowrap; }
.panebody p span { display: block; }
.panefoot { display: flex; align-items: center; gap: 5px; height: 38px; padding-bottom: 4px; border-top: 1px solid #7aa3e0; }
.panefoot a { line-height: 18px; }

.status { display: flex; height: 22px; flex: none; border-top: 1px solid #d4d4d4; background: #f0f0f0; }
.status span { flex: 1; }
.status p { width: 401px; padding-left: 4px; border-left: 1px solid #d4d4d4; line-height: 21px; }
</style>
